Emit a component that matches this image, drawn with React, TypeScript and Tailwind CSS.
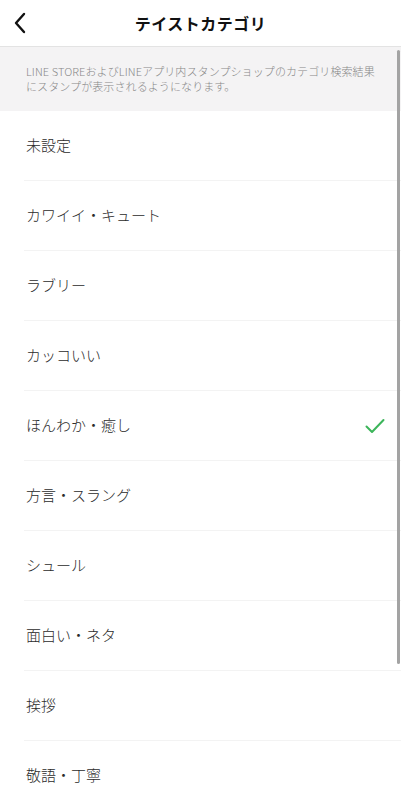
import { FC } from 'react';

const categorias = [
  '未設定',
  'カワイイ・キュート',
  'ラブリー',
  'カッコいい',
  'ほんわか・癒し',
  '方言・スラング',
  'シュール',
  '面白い・ネタ',
  '挨拶',
  '敬語・丁寧',
];

const selecionado = 'ほんわか・癒し';

const App: FC = () => {
  return (
    <div
      className="relative w-[401px] h-[800px] overflow-hidden bg-white text-[#2b2b2b]"
      style={{ fontFamily: '"Noto Sans CJK JP", "Noto Sans", sans-serif' }}
    >
      {/* Header */}
      <div className="h-[47px] flex items-center justify-center relative border-b border-[#e3e3e3]">
        <button className="absolute left-[8px] top-[11px] w-[24px] h-[24px] flex items-center justify-center">
          <svg width="14" height="22" viewBox="0 0 14 22" fill="none">
            <path d="M11 2 L3 11 L11 20" stroke="#111111" strokeWidth="2.4" strokeLinecap="round" strokeLinejoin="round" />
          </svg>
        </button>
        <h1 className="text-[16px] font-bold tracking-[0.5px] text-[#111111]">テイストカテゴリ</h1>
      </div>

      {/* Aviso */}
      <div className="bg-[#f4f3f4] h-[64px] px-[26px] pt-[17px]">
        <p className="text-[11px] leading-[15px] font-light tracking-[0.1px] text-[#888888]">
          LINE STOREおよびLINEアプリ内スタンプショップのカテゴリ検索結果
          <br />
          にスタンプが表示されるようになります。
        </p>
      </div>

      {/* Lista */}
      <ul>
        {categorias.map(cat => (
          <li key={cat} className="h-[70px] pl-[24px]">
            <div className="h-full flex items-center justify-between border-b border-[#f3f3f3] pr-[16px]">
              <span className="pl-[2px] text-[15px] font-light">{cat}</span>
              {cat === selecionado && (
                <svg width="20" height="16" viewBox="0 0 20 16" fill="none">
                  <path d="M1.5 8.5 L7 14 L18.5 2" stroke="#3cb55a" strokeWidth="2" strokeLinecap="round" strokeLinejoin="round" />
                </svg>
              )}
            </div>
          </li>
        ))}
      </ul>

      {/* Indicador de rolagem */}
      <div className="absolute right-[1px] top-[50px] w-[3px] h-[614px] rounded-full bg-[#a3a3a3]"></div>
    </div>
  );
};

export default App;
